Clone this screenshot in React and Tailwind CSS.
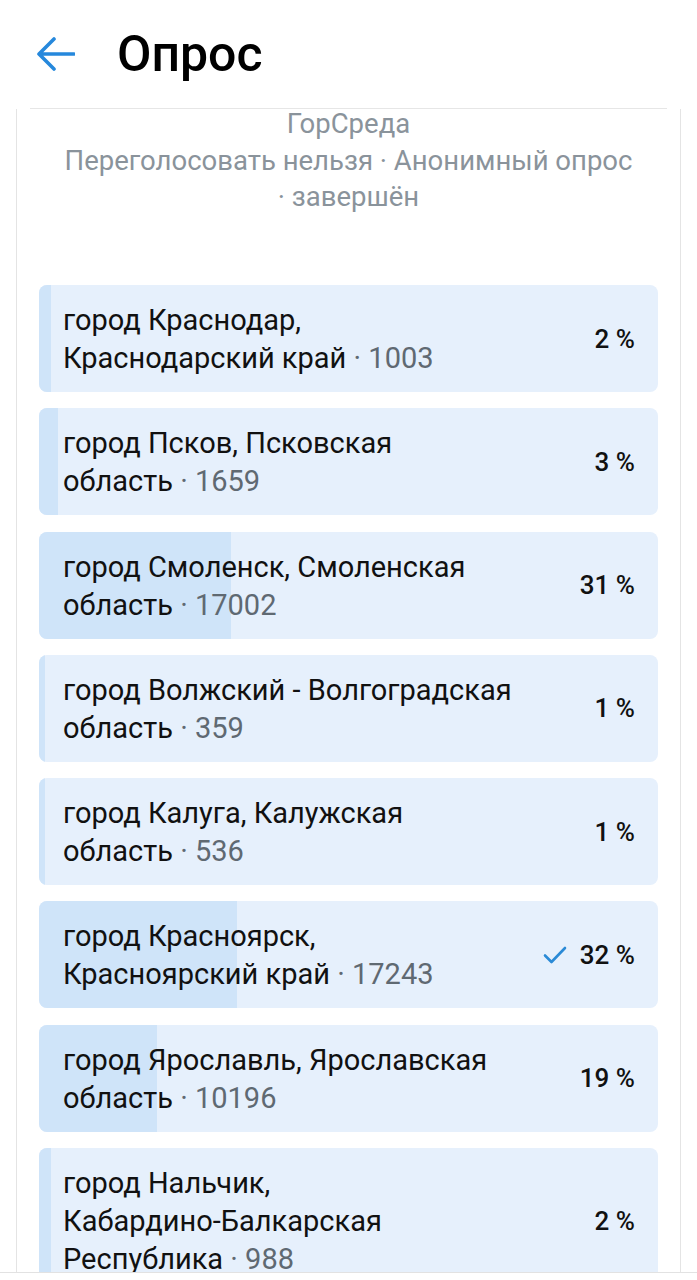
import React from 'react';

const options = [
  { lines: ['город Краснодар,', 'Краснодарский край'], count: 1003, pct: 2 },
  { lines: ['город Псков, Псковская', 'область'], count: 1659, pct: 3 },
  { lines: ['город Смоленск, Смоленская', 'область'], count: 17002, pct: 31 },
  { lines: ['город Волжский - Волгоградская', 'область'], count: 359, pct: 1 },
  { lines: ['город Калуга, Калужская', 'область'], count: 536, pct: 1 },
  { lines: ['город Красноярск,', 'Красноярский край'], count: 17243, pct: 32, voted: true },
  { lines: ['город Ярославль, Ярославская', 'область'], count: 10196, pct: 19 },
  { lines: ['город Нальчик,', 'Кабардино-Балкарская', 'Республика'], count: 988, pct: 2 },
];

const Option = ({ lines, count, pct, voted }) => (
  <div className="relative overflow-hidden rounded-[8px] bg-[#e6f0fc]">
    <div className="absolute left-0 top-0 bottom-0 bg-[#cfe4f9]" style={{ width: `${pct}%` }} />
    <div className="relative flex items-center justify-between pl-[24px] pr-[23px] pt-[16px] pb-[15px]">
      <div className="text-[29px] leading-[38px] text-[#111] whitespace-nowrap">
        {lines.map((l, i) => (
          <p key={i}>
            {l}
            {i === lines.length - 1 && <span className="text-[#5f6972]"> · {count}</span>}
          </p>
        ))}
      </div>
      <div className="flex items-center gap-[12px] shrink-0">
        {voted && (
          <svg width="26" height="20" viewBox="0 0 26 20" fill="none">
            <path d="M3 10.5 L9.5 17 L23 3" stroke="#2a8ad6" strokeWidth="2.6" strokeLinecap="round" strokeLinejoin="round" />
          </svg>
        )}
        <span className="text-[26px] font-medium text-[#111]">{pct} %</span>
      </div>
    </div>
  </div>
);

export default function App() {
  return (
    <div className="flex h-[1280px] flex-col overflow-hidden bg-white font-['Roboto',sans-serif]">
      <div className="px-[30px]">
        <div className="flex h-[109px] items-center border-b border-[#e6e6e6]">
          <svg width="40" height="40" viewBox="0 0 40 40" fill="none" className="ml-[5px]">
            <path d="M39 20 H5 M19 5 L4 20 L19 35" stroke="#2688dc" strokeWidth="3.6" strokeLinecap="round" strokeLinejoin="round" />
          </svg>
          <h1 className="ml-[42px] text-[50px] font-medium leading-none text-black">Опрос</h1>
        </div>
      </div>

      <div className="flex-1 overflow-hidden">
        <div className="mx-[16px] h-full border-x border-[#e4e4e4] px-[22px]">
          <div className="text-center text-[27.5px] text-[#8a939b]">
            <p className="leading-[30px]">ГорСреда</p>
            <p className="mt-[4px] leading-[36px]">
              Переголосовать нельзя · Анонимный опрос
              <br />· завершён
            </p>
          </div>
          <div className="mt-[70px] flex flex-col gap-[16.3px]">
            {options.map((o) => (
              <Option key={o.lines.join(' ')} {...o} />
            ))}
          </div>
        </div>
      </div>

      <div className="h-[8px] border-t border-[#e2e2e2] bg-white" />
    </div>
  );
}
